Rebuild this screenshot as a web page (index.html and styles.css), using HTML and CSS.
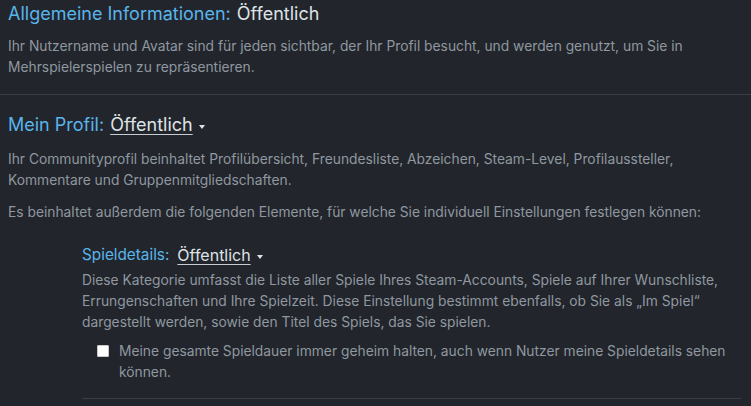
FILE: index.html
```html
<!DOCTYPE html>
<html lang="de">
<head>
<meta charset="utf-8">
<link rel="stylesheet" href="styles.css">
</head>
<body>
<div class="page">
  <section class="group">
    <div class="title"><span class="label">Allgemeine Informationen:</span><span class="value">Öffentlich</span></div>
    <p class="desc">Ihr Nutzername und Avatar sind für jeden sichtbar, der Ihr Profil besucht, und werden genutzt, um Sie in Mehrspielerspielen zu repräsentieren.</p>
  </section>
  <section class="group">
    <div class="title"><span class="label">Mein Profil:</span><span class="value drop">Öffentlich</span><span class="arrow"></span></div>
    <p class="desc">Ihr Communityprofil beinhaltet Profilübersicht, Freundesliste, Abzeichen, Steam-Level, Profilaussteller, Kommentare und Gruppenmitgliedschaften.</p>
    <p class="desc">Es beinhaltet außerdem die folgenden Elemente, für welche Sie individuell Einstellungen festlegen können:</p>
    <div class="sub">
      <div class="subtitle"><span class="label">Spieldetails:</span><span class="value drop">Öffentlich</span><span class="arrow"></span></div>
      <p class="subdesc">Diese Kategorie umfasst die Liste aller Spiele Ihres Steam-Accounts, Spiele auf Ihrer Wunschliste, Errungenschaften und Ihre Spielzeit. Diese Einstellung bestimmt ebenfalls, ob Sie als „Im Spiel“ dargestellt werden, sowie den Titel des Spiels, das Sie spielen.</p>
      <label class="check"><span class="box"></span><span class="checktext">Meine gesamte Spieldauer immer geheim halten, auch wenn Nutzer meine Spieldetails sehen können.</span></label>
    </div>
  </section>
</div>
</body>
</html>
```

FILE: styles.css
```css
html, body {
  margin: 0;
  padding: 0;
  background: #22252b;
}
body {
  font-family: "Inter", "Open Sans", sans-serif;
  color: #8f98a0;
  width: 751px;
  height: 406px;
  overflow: hidden;
}
.page {
  padding: 0 10px 0 8px;
}
.group {
  border-bottom: 1px solid #383d47;
  margin: 0 -10px 0 -8px;
  padding: 0 10px 0 8px;
}
.group + .group {
  border-bottom: none;
}
.title {
  font-size: 18px;
  line-height: 26px;
  padding-top: 1px;
  display: flex;
  align-items: center;
}
.label {
  color: #59b5ec;
}
.value {
  color: #dfe3e6;
  margin-left: 6px;
}
.drop {
  text-decoration: underline;
  text-underline-offset: 3px;
  text-decoration-thickness: 1px;
  text-decoration-color: #c6ccd2;
}
.arrow {
  width: 0;
  height: 0;
  border-left: 3.5px solid transparent;
  border-right: 3.5px solid transparent;
  border-top: 4px solid #dfe3e6;
  margin-left: 6px;
  margin-top: 3px;
}
.desc {
  font-size: 13.8px;
  line-height: 21px;
  margin: 9px 0 0;
}
.group:first-child .desc {
  padding-bottom: 16px;
}
.group + .group .title {
  padding-top: 17px;
}
.group + .group .desc {
  margin-top: 11px;
  padding-bottom: 0;
}
.sub {
  margin: 21px 0 0 74px;
  border-bottom: 1px solid #383d47;
  padding-bottom: 15px;
  padding-right: 6px;
}
.subtitle {
  font-size: 15.3px;
  line-height: 22px;
  display: flex;
  align-items: center;
}
.subtitle .value {
  font-size: 16px;
  margin-left: 8px;
}
.subdesc {
  font-size: 13.8px;
  line-height: 21px;
  margin: 4px 0 0;
}
.check {
  display: flex;
  align-items: flex-start;
  margin: 8px 0 0 15px;
  font-size: 13.8px;
  line-height: 21px;
}
.box {
  flex: none;
  width: 10px;
  height: 10px;
  background: #ffffff;
  border: 1px solid #c8c8c8;
  border-radius: 1px;
  margin-top: 4px;
  margin-right: 10px;
}
.checktext {
  flex: 1;
}
```
